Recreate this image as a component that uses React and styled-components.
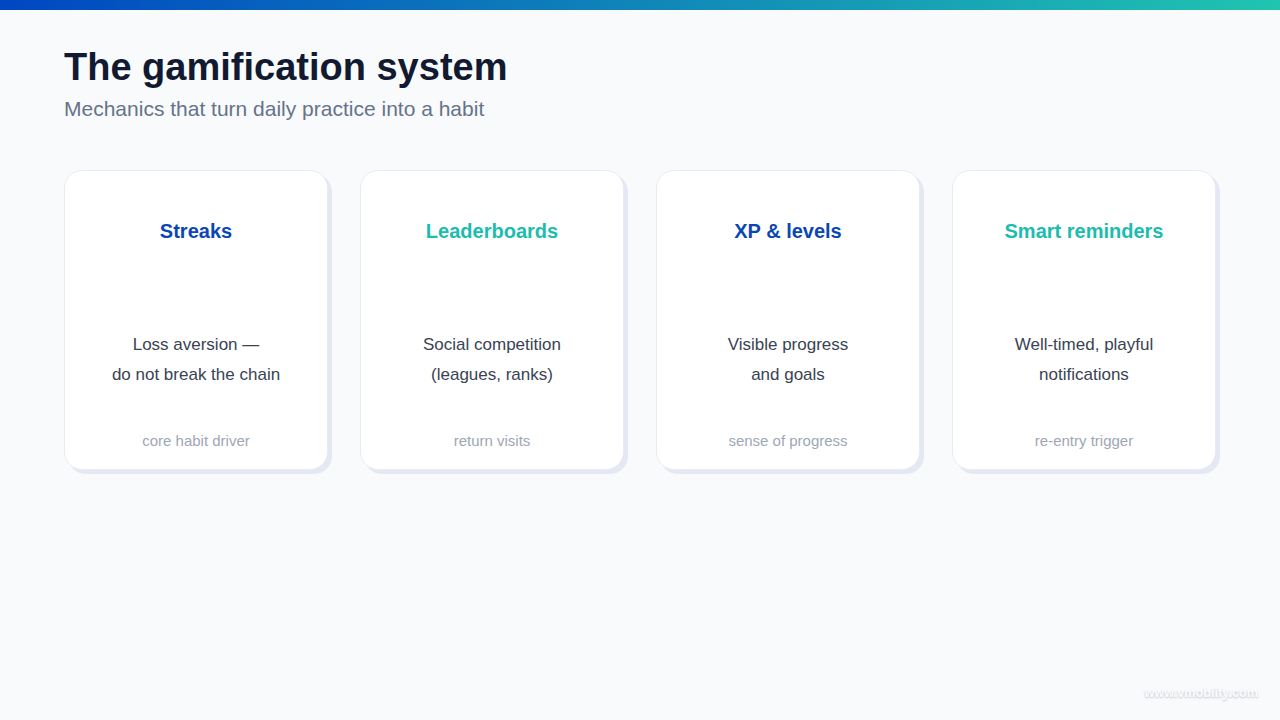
import React from "react";
import styled, {createGlobalStyle} from "styled-components";

const cards = [
  {title: "Streaks", accent: "#0a47b4", lines: ["Loss aversion —", "do not break the chain"], note: "core habit driver"},
  {title: "Leaderboards", accent: "#1cbcae", lines: ["Social competition", "(leagues, ranks)"], note: "return visits"},
  {title: "XP & levels", accent: "#0a47b4", lines: ["Visible progress", "and goals"], note: "sense of progress"},
  {title: "Smart reminders", accent: "#1cbcae", lines: ["Well-timed, playful", "notifications"], note: "re-entry trigger"},
];

const App = () => {
  return <Page>
    <GlobalStyle/>
    <TopBar/>
    <Content>
      <Title>The gamification system</Title>
      <Subtitle>Mechanics that turn daily practice into a habit</Subtitle>
      <CardRow>
        {cards.map(card => (
          <Card key={card.title}>
            <CardTitle $accent={card.accent}>{card.title}</CardTitle>
            <CardBody>
              {card.lines.map(line => <div key={line}>{line}</div>)}
            </CardBody>
            <CardNote>{card.note}</CardNote>
          </Card>
        ))}
      </CardRow>
    </Content>
    <Watermark>www.vmobiify.com</Watermark>
  </Page>
};

const GlobalStyle = createGlobalStyle`
  html, body {
    margin: 0;
    padding: 0;
    background: #f8fafc;
  }
`;

const Page = styled.div`
  position: relative;
  width: 1280px;
  height: 720px;
  overflow: hidden;
  background: #f8fafc;
  font-family: "Liberation Sans", Arial, sans-serif;
`;

const TopBar = styled.div`
  height: 10px;
  background: linear-gradient(90deg, #0047c2 0%, #20c4b0 100%);
`;

const Content = styled.div`
  padding: 34px 64px 0;
`;

const Title = styled.h1`
  margin: 0;
  font-size: 38px;
  line-height: 46px;
  font-weight: 700;
  color: #111a30;
`;

const Subtitle = styled.p`
  margin: 4px 0 0;
  font-size: 21px;
  line-height: 30px;
  color: #667389;
`;

const CardRow = styled.div`
  display: flex;
  gap: 32px;
  margin-top: 46px;
`;

const Card = styled.div`
  box-sizing: border-box;
  width: 264px;
  height: 300px;
  display: flex;
  flex-direction: column;
  align-items: center;
  background: #fff;
  border: 1px solid #e8ebf3;
  border-radius: 18px;
  box-shadow: 4px 4px 0 #e4e8f3;
  text-align: center;
`;

const CardTitle = styled.div`
  margin-top: 47px;
  font-size: 20px;
  line-height: 26px;
  font-weight: 700;
  color: ${props => props.$accent};
`;

const CardBody = styled.div`
  margin-top: 86px;
  font-size: 17px;
  line-height: 30px;
  color: #3a4354;
`;

const CardNote = styled.div`
  margin-top: 41px;
  font-size: 15px;
  line-height: 20px;
  color: #9ea7b5;
`;

const Watermark = styled.div`
  position: absolute;
  right: 22px;
  bottom: 20px;
  font-size: 12.7px;
  font-weight: 700;
  color: #fbfcfe;
  text-shadow: 0 1px 2px rgba(120, 125, 140, 0.45);
`;

export default App;
